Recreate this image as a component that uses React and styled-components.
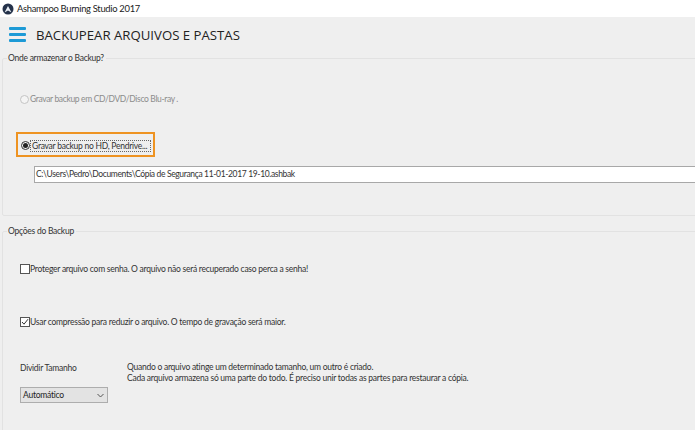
import React from "react";
import styled, { createGlobalStyle } from "styled-components";

const Global = createGlobalStyle`
  html, body { margin: 0; padding: 0; background: #efefef; }
  body { width: 695px; height: 430px; overflow: hidden; font-family: Lato, "Noto Sans", sans-serif; color: #2a2a2a; letter-spacing: -0.25px; }
`;
const Window = styled.div`width: 695px; height: 430px; overflow: hidden; display: flex; flex-direction: column; background: #efefef;`;
const TitleBar = styled.div`height: 17px; flex: none; background: #fff; display: flex; align-items: center; gap: 3px; padding-left: 2px; font-size: 9.4px; letter-spacing: -0.3px; color: #222;`;
const Header = styled.div`height: 35px; flex: none; display: flex; align-items: center; padding-left: 9px; gap: 10px;`;
const Menu = styled.div`width: 17px; display: flex; flex-direction: column; gap: 3px; span { height: 3px; background: #1d9ad6; border-radius: 1px; }`;
const Heading = styled.h1`margin: 0; font-family: "Open Sans", sans-serif; font-size: 13.2px; font-weight: 400; letter-spacing: 0; color: #222;`;
const Group = styled.fieldset`
  margin: 0 -8px 0 2px; padding: 0 0 0 16px; box-sizing: border-box; flex: none;
  border: 1px solid #e2e2e2; border-radius: 2px; height: ${p => p.$h}px; min-width: 0;
`;
const GroupGap = styled.div`height: 9px; flex: none;`;
const Legend = styled.legend`margin-left: -12px; padding: 0 2px 0 1px; font-size: 8.5px; line-height: 12px; color: #333;`;
const Label = styled.div`font-size: 8.5px; line-height: 12px; color: ${p => (p.$muted ? "#8c8c8c" : "#333")}; letter-spacing: ${p => (p.$muted ? "-0.35px" : "inherit")};`;
const RadioRow = styled.div`display: flex; align-items: center; gap: 1px; height: 12px; margin-top: ${p => p.$top}px;`;
const Radio = styled.span`
  width: 9px; height: 9px; border-radius: 50%; flex: none; box-sizing: border-box; margin-left: 1px;
  border: 1px solid ${p => (p.$on ? "#333" : "#c4c4c4")}; background: #f4f4f4; display: flex; align-items: center; justify-content: center;
  &::after { content: ""; width: 5px; height: 5px; border-radius: 50%; background: ${p => (p.$on ? "#222" : "transparent")}; }
`;
const Highlight = styled.div`
  width: 139px; height: 25px; margin: 27px 0 0 -3px; box-sizing: border-box; border: 2px solid #ee9322;
  display: flex; align-items: center; padding: 2px 0 0 2px; gap: 0;
`;
const Focused = styled.span`
  font-size: 8.5px; line-height: 10px; color: #333; border: 1px dotted #666; padding: 0 1px; width: 121px; box-sizing: border-box; white-space: nowrap;
`;
const PathInput = styled.div`
  margin: 9px 0 0 15px; height: 17px; box-sizing: border-box; background: #fff; border: 1px solid #a8a8a8;
  font-size: 8.5px; line-height: 15px; padding-left: 1px; color: #333; white-space: nowrap; letter-spacing: -0.35px;
`;
const CheckRow = styled.div`display: flex; align-items: center; gap: 0; height: 12px; margin-top: ${p => p.$top}px;`;
const Box = styled.span`
  width: 10px; height: 10px; flex: none; box-sizing: border-box; background: #fff; border: 1px solid #555; margin-left: 1px; display: flex;
`;
const SplitRow = styled.div`display: flex; margin-top: 34px; margin-left: 1px;`;
const SplitLeft = styled.div`width: 107px; flex: none;`;
const Select = styled.div`
  margin-top: 13px; width: 88px; height: 16px; box-sizing: border-box; background: #e3e3e3; border: 1px solid #adadad;
  display: flex; align-items: center; justify-content: space-between; padding: 0 3px 0 2px; font-size: 8.5px; color: #222;
`;
const Tip = styled.div`font-size: 8.5px; line-height: 11px; color: #333; white-space: nowrap;`;

export default function App() {
  return (
    <Window>
      <Global />
      <TitleBar>
        <svg width="12" height="12" viewBox="0 0 12 12">
          <circle cx="6" cy="6" r="5.5" fill="#25324a" />
          <path d="M2.5 9.5 6 3l3.5 6.5L6 7.5z" fill="#e8eef5" />
        </svg>
        Ashampoo Burning Studio 2017
      </TitleBar>
      <Header>
        <Menu><span /><span /><span /></Menu>
        <Heading>BACKUPEAR ARQUIVOS E PASTAS</Heading>
      </Header>
      <Group $h={164}>
        <Legend>Onde armazenar o Backup?</Legend>
        <RadioRow $top={29}>
          <Radio />
          <Label $muted>Gravar backup em CD/DVD/Disco Blu-ray .</Label>
        </RadioRow>
        <Highlight>
          <Radio $on />
          <Focused>Gravar backup no HD, Pendrive...</Focused>
        </Highlight>
        <PathInput>{"C:\\Users\\Pedro\\Documents\\Cópia de Segurança 11-01-2017 19-10.ashbak"}</PathInput>
      </Group>
      <GroupGap />
      <Group $h={240}>
        <Legend>Opções do Backup</Legend>
        <CheckRow $top={26}>
          <Box />
          <Label>Proteger arquivo com senha. O arquivo não será recuperado caso perca a senha!</Label>
        </CheckRow>
        <CheckRow $top={41}>
          <Box>
            <svg width="8" height="8" viewBox="0 0 8 8"><path d="M1 4 3 6.2 7 1.2" fill="none" stroke="#333" strokeWidth="1" /></svg>
          </Box>
          <Label>Usar compressão para reduzir o arquivo. O tempo de gravação será maior.</Label>
        </CheckRow>
        <SplitRow>
          <SplitLeft>
            <Label>Dividir Tamanho</Label>
            <Select>
              Automático
              <svg width="7" height="5" viewBox="0 0 7 5"><path d="M.5 1 3.5 4 6.5 1" fill="none" stroke="#555" strokeWidth="1" /></svg>
            </Select>
          </SplitLeft>
          <Tip>
            Quando o arquivo atinge um determinado tamanho, um outro é criado.<br />
            Cada arquivo armazena só uma parte do todo. É preciso unir todas as partes para restaurar a cópia.
          </Tip>
        </SplitRow>
      </Group>
    </Window>
  );
}
